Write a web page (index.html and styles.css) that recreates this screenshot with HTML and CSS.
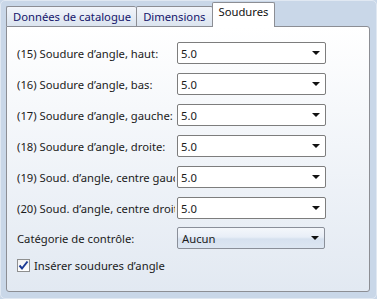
FILE: index.html
```html
<!DOCTYPE html>
<html lang="fr">
<head>
    <meta charset="UTF-8">
    <title>Soudures</title>
    <link rel="stylesheet" href="styles.css">
</head>
<body>
    <div class="window">
        <div class="tabs">
            <div class="tab">Données de catalogue</div>
            <div class="tab">Dimensions</div>
            <div class="tab active">Soudures</div>
        </div>
        <div class="panel">
            <div class="row">
                <label class="label">(15) Soudure d’angle, haut:</label>
                <div class="combo"><span>5.0</span><i class="arrow"></i></div>
            </div>
            <div class="row">
                <label class="label">(16) Soudure d’angle, bas:</label>
                <div class="combo"><span>5.0</span><i class="arrow"></i></div>
            </div>
            <div class="row">
                <label class="label">(17) Soudure d’angle, gauche:</label>
                <div class="combo"><span>5.0</span><i class="arrow"></i></div>
            </div>
            <div class="row">
                <label class="label">(18) Soudure d’angle, droite:</label>
                <div class="combo"><span>5.0</span><i class="arrow"></i></div>
            </div>
            <div class="row">
                <label class="label">(19) Soud. d’angle, centre gauche:</label>
                <div class="combo"><span>5.0</span><i class="arrow"></i></div>
            </div>
            <div class="row">
                <label class="label">(20) Soud. d’angle, centre droite:</label>
                <div class="combo"><span>5.0</span><i class="arrow"></i></div>
            </div>
            <div class="row row-cat">
                <label class="label">Catégorie de contrôle:</label>
                <div class="combo combo-list"><span>Aucun</span><i class="arrow"></i></div>
            </div>
            <div class="check-row">
                <span class="checkbox">
                    <svg width="11" height="11" viewBox="0 0 11 11"><path d="M1.5 5.5 L4 8.5 L9.5 1.5" fill="none" stroke="#1c3a94" stroke-width="2"/></svg>
                </span>
                <span>Insérer soudures d’angle</span>
            </div>
        </div>
    </div>
</body>
</html>
```

FILE: styles.css
```css
body {
    margin: 0;
    background-color: #c9d7e8;
    font-family: "Noto Sans", "Segoe UI", sans-serif;
    font-size: 11.25px;
    color: #1b1b1b;
}
.window {
    width: 377px;
    height: 299px;
    box-sizing: border-box;
    padding: 1px 6px 6px 5px;
    border: 1px solid #e0e8f2;
    border-radius: 5px;
}
.tabs {
    display: flex;
    align-items: flex-end;
    height: 24px;
    position: relative;
    z-index: 1;
}
.tab {
    height: 19px;
    padding: 0 6px;
    line-height: 19px;
    color: #15156b;
    background: linear-gradient(#f2f5fa, #dbe4ef);
    border: 1px solid #8c8e94;
    border-bottom: none;
    border-right: none;
    border-radius: 2px 2px 0 0;
}
.tab:first-child {
    padding-right: 5px;
}
.tab:nth-child(2) {
    border-right: 1px solid #8c8e94;
}
.tab.active {
    height: 24px;
    margin-bottom: -1px;
    margin-left: -1px;
    padding: 0 6px;
    color: #111;
    background: #fff;
    border-right: 1px solid #8c8e94;
    line-height: 18px;
}
.panel {
    height: 266px;
    box-sizing: border-box;
    padding: 15px 0 0 10px;
    border: 1px solid #8c8e94;
    border-radius: 0 3px 3px 3px;
    background: linear-gradient(#ffffff, #e2e9f2);
}
.row {
    display: flex;
    align-items: center;
    height: 22px;
    margin-bottom: 9px;
}
.row-cat {
    margin-top: -1px;
}
.label {
    width: 158px;
    margin-right: 2px;
    white-space: nowrap;
    overflow: hidden;
}
.combo {
    display: flex;
    align-items: center;
    width: 149px;
    height: 22px;
    box-sizing: border-box;
    padding: 0 5px 0 3px;
    background: #fff;
    border: 1px solid #7d7d7d;
    border-radius: 2px;
}
.combo span {
    flex: 1;
}
.combo-list {
    width: 148px;
    padding-left: 4px;
    background: linear-gradient(#f4f7fb 0%, #e8eef7 45%, #d6e1ef 55%, #dde6f2 100%);
    border-color: #8a8f99;
}
.arrow {
    width: 0;
    height: 0;
    border-left: 4px solid transparent;
    border-right: 4px solid transparent;
    border-top: 4px solid #111;
}
.check-row {
    display: flex;
    align-items: center;
    gap: 4px;
    margin-top: 7px;
}
.checkbox {
    display: flex;
    align-items: center;
    justify-content: center;
    width: 13px;
    height: 13px;
    box-sizing: border-box;
    border: 1px solid #8e8f8f;
    background: linear-gradient(#f1f1f1, #ffffff);
}
```
